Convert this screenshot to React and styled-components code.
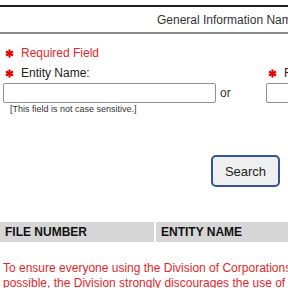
import styled, { createGlobalStyle } from "styled-components";

const GlobalStyle = createGlobalStyle`
  * { margin: 0; padding: 0; box-sizing: border-box; }
  body {
    font-family: "Liberation Sans", Arial, sans-serif;
    background: #fff;
    overflow: hidden;
  }
`;

const Page = styled.div`
  width: 420px;
  padding-top: 5px;
`;

const TabBar = styled.div`
  border-top: 2px solid #1f1f1f;
  border-bottom: 2px solid #8a8a8a;
  height: 29px;
  display: flex;
  align-items: center;
  padding-left: 157px;
  font-size: 12px;
  color: #333;
  white-space: nowrap;
`;

const Form = styled.div`
  padding: 9px 0 0 3px;
`;

const Label = styled.div`
  display: flex;
  align-items: center;
  gap: 7px;
  font-size: 12px;
  height: 20px;
  color: ${(p) => (p.$red ? "#e4262c" : "#222")};
  padding-left: 2px;
  white-space: nowrap;
`;

const Star = () => (
  <svg width="9" height="9" viewBox="0 0 10 10">
    <g stroke="#e60000" strokeWidth="2.4" strokeLinecap="butt">
      <line x1="5" y1="0.5" x2="5" y2="9.5" />
      <line x1="1.1" y1="2.75" x2="8.9" y2="7.25" />
      <line x1="1.1" y1="7.25" x2="8.9" y2="2.75" />
    </g>
  </svg>
);

const Fields = styled.div`
  display: flex;
  align-items: flex-end;
`;

const FieldCol = styled.div`
  display: flex;
  flex-direction: column;
`;

const Input = styled.input`
  width: ${(p) => p.$w}px;
  height: 20px;
  border: 1px solid #8f8f8f;
  border-radius: 2px;
  background: #fff;
`;

const Or = styled.span`
  font-size: 12px;
  color: #333;
  width: 50px;
  padding-left: 4px;
  height: 20px;
  line-height: 20px;
`;

const Hint = styled.div`
  font-size: 9px;
  line-height: 11px;
  color: #333;
  padding: 1px 0 0 7px;
`;

const ButtonRow = styled.div`
  display: flex;
  padding: 40px 0 0 208px;
`;

const Button = styled.button`
  width: 69px;
  height: 32px;
  border: 2px solid #34558f;
  border-radius: 5px;
  background: #efefef;
  font-family: inherit;
  font-size: 13px;
  color: #222;
`;

const Table = styled.div`
  display: flex;
  gap: 2px;
  margin-top: 35px;
`;

const Th = styled.div`
  width: ${(p) => p.$w}px;
  height: 20px;
  background: #d6d6d6;
  font-size: 12px;
  font-weight: bold;
  color: #111;
  display: flex;
  align-items: center;
  padding-left: 5px;
`;

const Notice = styled.p`
  margin-top: 19px;
  font-size: 12px;
  line-height: 15px;
  color: #e4262c;
  white-space: nowrap;
  padding-left: 3px;
`;

export default function App() {
  return (
    <Page>
      <GlobalStyle />
      <TabBar>General Information Name Search</TabBar>
      <Form>
        <Label $red>
          <Star />
          Required Field
        </Label>
        <Fields>
          <FieldCol>
            <Label>
              <Star />
              Entity Name:
            </Label>
            <Input $w={213} />
          </FieldCol>
          <Or>or</Or>
          <FieldCol>
            <Label>
              <Star />
              File Number:
            </Label>
            <Input $w={120} />
          </FieldCol>
        </Fields>
        <Hint>[This field is not case sensitive.]</Hint>
        <ButtonRow>
          <Button>Search</Button>
        </ButtonRow>
      </Form>
      <Table>
        <Th $w={154}>FILE NUMBER</Th>
        <Th $w={260}>ENTITY NAME</Th>
      </Table>
      <Notice>
        To ensure everyone using the Division of Corporations services has the best experience
        <br />
        possible, the Division strongly discourages the use of automated tools
      </Notice>
    </Page>
  );
}
